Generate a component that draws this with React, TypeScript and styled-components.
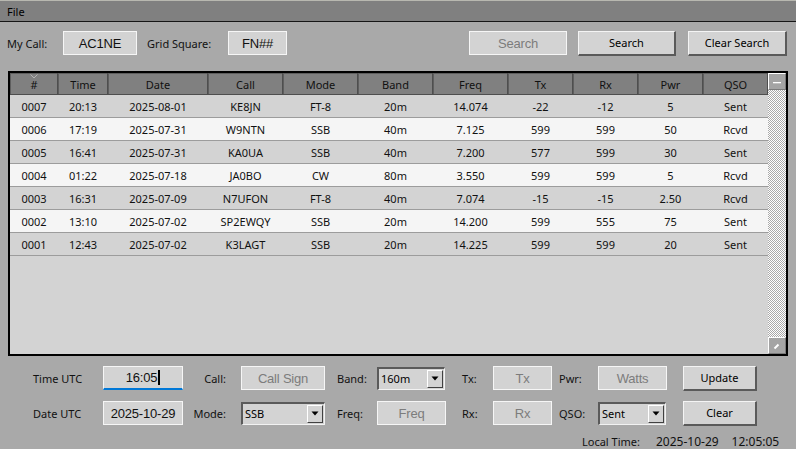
import React from 'react';
import styled, { createGlobalStyle } from 'styled-components';

const Global = createGlobalStyle`
  html, body { margin: 0; padding: 0; background: #a9a9a9; }
  body { width: 796px; height: 449px; overflow: hidden; font-family: "Noto Sans", "Segoe UI", sans-serif; }
  * { box-sizing: border-box; }
`;

const Window = styled.div`
  width: 796px;
  height: 449px;
  background: #a9a9a9;
  display: flex;
  flex-direction: column;
  overflow: hidden;
  color: #111;
`;

const MenuBar = styled.div`
  height: 22px;
  background: #808080;
  border-top: 1px solid #b8b8b0;
  border-bottom: 1px solid #161616;
  display: flex;
  align-items: center;
  padding-left: 7px;
  font-size: 11px;
  color: #000;
`;

const TopRow = styled.div`
  margin-top: 9px;
  height: 24px;
  display: flex;
  align-items: center;
  padding-left: 7px;
`;

const Label = styled.span<{ $w?: number; $pl?: number; $pr?: number; $align?: string }>`
  font-size: 11px;
  color: #111;
  white-space: nowrap;
  ${(p) => (p.$w ? `width: ${p.$w}px; flex: none;` : '')}
  padding-left: ${(p) => p.$pl ?? 0}px;
  padding-right: ${(p) => p.$pr ?? 0}px;
  text-align: ${(p) => p.$align ?? 'left'};
`;

const Entry = styled.div<{ $w: number; $dim?: boolean; $focus?: boolean; $ml?: number }>`
  width: ${(p) => p.$w}px;
  height: 24px;
  flex: none;
  margin-left: ${(p) => p.$ml ?? 0}px;
  background: #d3d3d3;
  border: 1.5px solid #f6f6f6;
  ${(p) => (p.$focus ? 'border-bottom: 2px solid #0078d7;' : '')}
  display: flex;
  align-items: center;
  justify-content: center;
  font-family: "Liberation Sans", Arial, sans-serif;
  font-size: 13px;
  letter-spacing: -0.2px;
  color: ${(p) => (p.$dim ? '#7c7c7c' : '#111')};
`;

const Caret = styled.span`
  display: inline-block;
  width: 2px;
  height: 15px;
  background: #000;
  margin-left: 1px;
`;

const Button = styled.div<{ $w: number; $ml?: number }>`
  width: ${(p) => p.$w}px;
  height: 25px;
  flex: none;
  margin-left: ${(p) => p.$ml ?? 0}px;
  background: #d3d3d3;
  border-style: solid;
  border-width: 1px 2px 2px 1px;
  border-color: #f4f4f4 #5a5a5a #5a5a5a #f4f4f4;
  display: flex;
  align-items: center;
  justify-content: center;
  font-size: 11px;
  color: #000;
`;

const Spacer = styled.div<{ $fixed?: number }>`
  flex: ${(p) => (p.$fixed ? `0 0 ${p.$fixed}px` : '1')};
`;

const Frame = styled.div`
  margin: 16px 0 0 8px;
  width: 780px;
  height: 285px;
  border: 2px solid #000;
  display: flex;
  flex: none;
`;

const TableArea = styled.div`
  width: 758px;
  background: #d3d3d3;
  display: flex;
  flex-direction: column;
`;

const COLS = '48px 50px 100px 75px 75px 75px 75px 65px 65px 65px 65px';

const HeaderRow = styled.div`
  display: grid;
  grid-template-columns: ${COLS};
  height: 22px;
  flex: none;
`;

const HeaderCell = styled.div`
  position: relative;
  background: #808080;
  box-shadow: inset -1px -1px 0 #4e4e4e, inset 1px 1px 0 #5e5e5e;
  display: flex;
  align-items: center;
  justify-content: center;
  padding-top: 1px;
  font-size: 11px;
  color: #111;
`;

const SortMark = styled.svg`
  position: absolute;
  top: 1px;
  left: 50%;
  margin-left: -4px;
`;

const Row = styled.div<{ $alt: boolean }>`
  display: grid;
  grid-template-columns: ${COLS};
  height: 23px;
  flex: none;
  background: ${(p) => (p.$alt ? '#f5f5f5' : '#d3d3d3')};
  border-bottom: 1px solid #9c9c9c;
`;

const Cell = styled.div`
  display: flex;
  align-items: center;
  justify-content: center;
  font-size: 11px;
  color: #111;
`;

const ScrollBar = styled.div`
  width: 18px;
  display: flex;
  flex-direction: column;
`;

const ScrollBtn = styled.div`
  height: 17px;
  flex: none;
  background: #a4a4a4;
  border-style: solid;
  border-width: 1px;
  border-color: #fff #7a7a7a #7a7a7a #fff;
  display: flex;
  align-items: center;
  justify-content: center;
`;

const Track = styled.div`
  flex: 1;
  background: repeating-conic-gradient(#ffffff 0 25%, #a9a9a9 0 50%) 0 0 / 2px 2px;
`;

const Form = styled.div`
  margin-top: 10px;
  padding-left: 33px;
  display: grid;
  grid-template-columns: 70px 80px 58px 84px 52px 69px 47px 59px 46px 69px 16px 74px;
  grid-auto-rows: 24px;
  row-gap: 11px;
  align-items: center;
`;

const Select = styled.div<{ $w: number }>`
  width: ${(p) => p.$w}px;
  height: 23px;
  background: #d3d3d3;
  border-style: solid;
  border-width: 2px 1px 1px 2px;
  border-color: #5a5a5a #f2f2f2 #f2f2f2 #5a5a5a;
  display: flex;
  align-items: center;
  padding-left: 2px;
  font-size: 11px;
  color: #000;
`;

const SelectText = styled.span`
  flex: 1;
`;

const DropBtn = styled.div`
  width: 16px;
  height: 18px;
  margin-right: 1px;
  background: #d3d3d3;
  border-style: solid;
  border-width: 1px;
  border-color: #fff #404040 #404040 #fff;
  display: flex;
  align-items: center;
  justify-content: center;
`;

const LocalRow = styled.div`
  margin: 8px 0 0 582px;
  display: flex;
  align-items: center;
  height: 16px;
`;

const LocalValue = styled.span<{ $ml: number }>`
  margin-left: ${(p) => p.$ml}px;
  font-size: 12px;
  color: #111;
`;

type Rec = [string, string, string, string, string, string, string, string, string, string, string];

const records: Rec[] = [
  ['0007', '20:13', '2025-08-01', 'KE8JN', 'FT-8', '20m', '14.074', '-22', '-12', '5', 'Sent'],
  ['0006', '17:19', '2025-07-31', 'W9NTN', 'SSB', '40m', '7.125', '599', '599', '50', 'Rcvd'],
  ['0005', '16:41', '2025-07-31', 'KA0UA', 'SSB', '40m', '7.200', '577', '599', '30', 'Sent'],
  ['0004', '01:22', '2025-07-18', 'JA0BO', 'CW', '80m', '3.550', '599', '599', '5', 'Rcvd'],
  ['0003', '16:31', '2025-07-09', 'N7UFON', 'FT-8', '40m', '7.074', '-15', '-15', '2.50', 'Rcvd'],
  ['0002', '13:10', '2025-07-02', 'SP2EWQY', 'SSB', '20m', '14.200', '599', '555', '75', 'Sent'],
  ['0001', '12:43', '2025-07-02', 'K3LAGT', 'SSB', '20m', '14.225', '599', '599', '20', 'Sent'],
];

const headers = ['#', 'Time', 'Date', 'Call', 'Mode', 'Band', 'Freq', 'Tx', 'Rx', 'Pwr', 'QSO'];

const Tri = () => (
  <svg width="8" height="5" viewBox="0 0 8 5">
    <path d="M0.5 0.5 L7.5 0.5 L4 4.5 Z" fill="#000" />
  </svg>
);

const Drop: React.FC<{ w: number; value: string }> = ({ w, value }) => (
  <Select $w={w}>
    <SelectText>{value}</SelectText>
    <DropBtn>
      <Tri />
    </DropBtn>
  </Select>
);

export default function App() {
  return (
    <Window>
      <Global />
      <MenuBar>File</MenuBar>
      <TopRow>
        <Label $w={56}>My Call:</Label>
        <Entry $w={74}>AC1NE</Entry>
        <Label $w={91} $pl={10}>Grid Square:</Label>
        <Entry $w={59}>FN##</Entry>
        <Spacer />
        <Entry $w={98} $dim>Search</Entry>
        <Button $w={98} $ml={11}>Search</Button>
        <Button $w={99} $ml={12}>Clear Search</Button>
        <Spacer $fixed={9} />
      </TopRow>
      <Frame>
        <TableArea>
          <HeaderRow>
            {headers.map((h, i) => (
              <HeaderCell key={h}>
                {i === 0 && (
                  <SortMark width="8" height="5" viewBox="0 0 8 5">
                    <path d="M0.5 0.5 L4 4 L7.5 0.5" stroke="#b4b4b4" fill="none" strokeWidth="1" />
                  </SortMark>
                )}
                {h}
              </HeaderCell>
            ))}
          </HeaderRow>
          {records.map((r, i) => (
            <Row key={r[0]} $alt={i % 2 === 1}>
              {r.map((v, j) => (
                <Cell key={j}>{v}</Cell>
              ))}
            </Row>
          ))}
        </TableArea>
        <ScrollBar>
          <ScrollBtn>
            <svg width="10" height="8" viewBox="0 0 10 8">
              <rect x="1" y="4" width="8" height="1.3" fill="#fff" />
            </svg>
          </ScrollBtn>
          <Track />
          <ScrollBtn>
            <svg width="10" height="8" viewBox="0 0 10 8">
              <path d="M2.5 6.5 L6.5 2.5" stroke="#fff" strokeWidth="2" />
            </svg>
          </ScrollBtn>
        </ScrollBar>
      </Frame>
      <Form>
        <Label>Time UTC</Label>
        <Entry $w={80} $focus>
          16:05
          <Caret />
        </Entry>
        <Label $align="right" $pr={15}>Call:</Label>
        <Entry $w={84} $dim>Call Sign</Entry>
        <Label $pl={12}>Band:</Label>
        <Drop w={68} value="160m" />
        <Label $pl={16}>Tx:</Label>
        <Entry $w={59} $dim>Tx</Entry>
        <Label $pl={7}>Pwr:</Label>
        <Entry $w={69} $dim>Watts</Entry>
        <span />
        <Button $w={74}>Update</Button>

        <Label>Date UTC</Label>
        <Entry $w={80}>2025-10-29</Entry>
        <Label $align="right" $pr={15}>Mode:</Label>
        <Drop w={84} value="SSB" />
        <Label $pl={12}>Freq:</Label>
        <Entry $w={69} $dim>Freq</Entry>
        <Label $pl={16}>Rx:</Label>
        <Entry $w={59} $dim>Rx</Entry>
        <Label $pl={7}>QSO:</Label>
        <Drop w={68} value="Sent" />
        <span />
        <Button $w={74}>Clear</Button>
      </Form>
      <LocalRow>
        <Label>Local Time:</Label>
        <LocalValue $ml={16}>2025-10-29</LocalValue>
        <LocalValue $ml={13}>12:05:05</LocalValue>
      </LocalRow>
    </Window>
  );
}
